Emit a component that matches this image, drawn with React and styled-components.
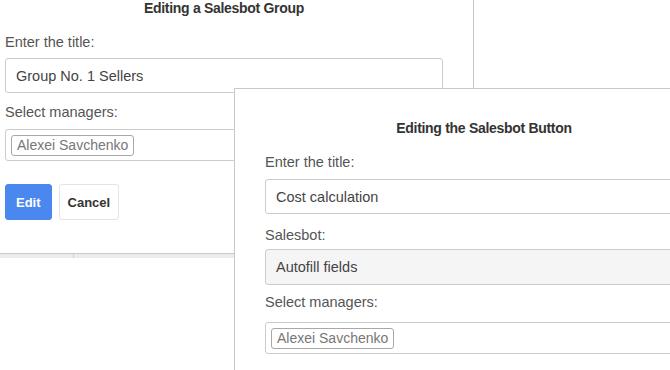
import React from 'react';
import styled, { createGlobalStyle } from 'styled-components';

const GlobalStyle = createGlobalStyle`
    html, body {
        margin: 0;
        padding: 0;
        background: #fff;
        overflow: hidden;
    }
    body {
        font-family: "Liberation Sans", Arial, sans-serif;
        color: #444;
    }
`

const Page = styled.div`
    position: relative;
    width: 670px;
    height: 370px;
    overflow: hidden;
    background: #fff;
`

const TableHead = styled.div`
    display: flex;
    margin-top: 253px;
    height: 4px;
    border-top: 1px solid #cfcfcf;
    background: #ececec;
`

const HeadCell = styled.div`
    width: ${p => p.w}px;
    border-right: 1px solid #d0d0d0;
`

const Dialog = styled.div`
    position: absolute;
    left: ${p => p.x}px;
    top: ${p => p.y}px;
    width: 438px;
    padding: ${p => p.pt || 30}px 30px ${p => p.pb || 30}px;
    background: #fff;
    border: 1px solid #c8c8c8;
    display: flex;
    flex-direction: column;
`

const Close = styled.svg`
    position: absolute;
    top: 20px;
    right: 25px;
    width: 14px;
    height: 14px;
    stroke: #dcdcdc;
    stroke-width: 1.6;
`

const Title = styled.div`
    font-size: 14px;
    font-weight: bold;
    letter-spacing: -0.3px;
    line-height: 20px;
    color: #333;
    text-align: center;
    margin-bottom: 14px;
`

const Label = styled.div`
    font-size: 14.5px;
    line-height: 20px;
    color: #555;
    margin-top: ${p => p.mt || 0}px;
    margin-bottom: ${p => p.mb ?? 7}px;
`

const Field = styled.div`
    box-sizing: border-box;
    height: ${p => p.h || 35}px;
    display: flex;
    align-items: center;
    padding: 0 ${p => (p.tags ? 5 : 10)}px;
    border: 1px solid #cccccc;
    border-radius: 3px;
    background: ${p => (p.grey ? '#f5f5f5' : '#fff')};
    font-size: 14.5px;
    color: #444;
`

const Tag = styled.span`
    box-sizing: border-box;
    height: 21px;
    display: inline-flex;
    align-items: center;
    padding: 0 5px;
    border: 1px solid #a8a8a8;
    border-radius: 3px;
    font-size: 14px;
    color: #777;
`

const Actions = styled.div`
    display: flex;
    gap: 7px;
    margin-top: 23px;
`

const Button = styled.button`
    box-sizing: border-box;
    height: 36px;
    padding: 0 ${p => (p.primary ? 10 : 8)}px;
    border: 1px solid ${p => (p.primary ? '#4a88f0' : '#e4e4e4')};
    border-radius: 3px;
    background: ${p => (p.primary ? '#4a88f0' : '#fff')};
    color: ${p => (p.primary ? '#fff' : '#333')};
    font-family: "Liberation Sans", Arial, sans-serif;
    font-size: 13px;
    font-weight: bold;
`

export default function App() {
    return (
        <Page>
            <GlobalStyle />
            <TableHead>
                <HeadCell w={73} />
            </TableHead>

            <Dialog x={-26} y={-33} pb={33}>
                <Close viewBox="0 0 14 14">
                    <path d="M2 2 L12 12 M12 2 L2 12" />
                </Close>
                <Title>Editing a Salesbot Group</Title>
                <Label mb={6}>Enter the title:</Label>
                <Field>Group No. 1 Sellers</Field>
                <Label mt={9}>Select managers:</Label>
                <Field h={32} tags>
                    <Tag>Alexei Savchenko</Tag>
                </Field>
                <Actions>
                    <Button primary>Edit</Button>
                    <Button>Cancel</Button>
                </Actions>
            </Dialog>

            <Dialog x={234} y={88} pt={29}>
                <Title>Editing the Salesbot Button</Title>
                <Label>Enter the title:</Label>
                <Field>Cost calculation</Field>
                <Label mt={11} mb={4}>Salesbot:</Label>
                <Field h={36} grey>Autofill fields</Field>
                <Label mt={7} mb={10}>Select managers:</Label>
                <Field h={32} tags>
                    <Tag>Alexei Savchenko</Tag>
                </Field>
            </Dialog>
        </Page>
    )
}
